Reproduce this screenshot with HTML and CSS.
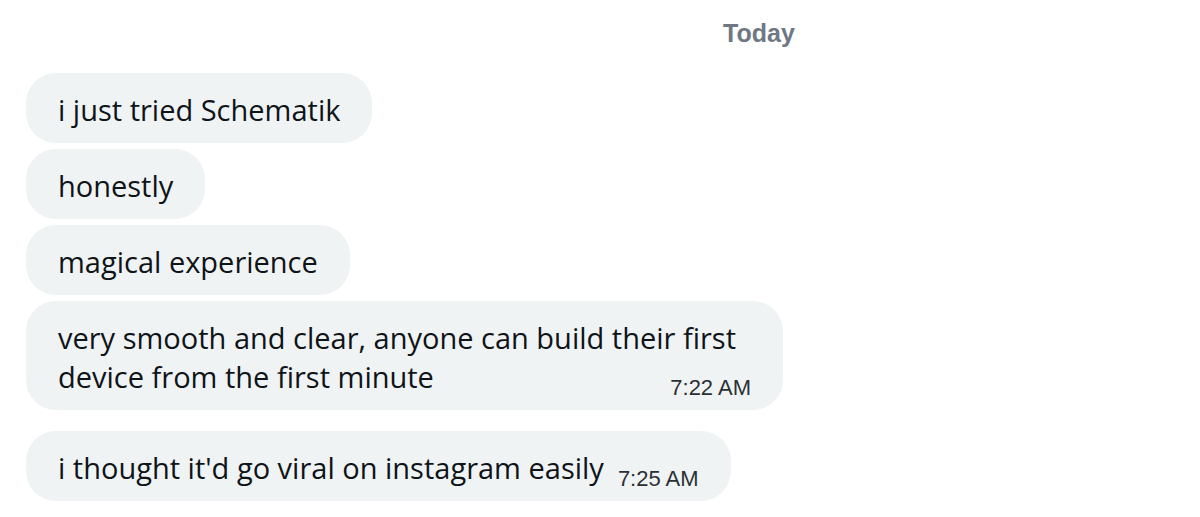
FILE: index.html
```html
<!DOCTYPE html>
<html lang="en">
<head>
<meta charset="utf-8">
<title>Messages</title>
<link rel="stylesheet" href="styles.css">
</head>
<body>
<main class="chat">
  <div class="day"><span class="day-label">Today</span></div>
  <div class="group">
    <div class="bubble">i just tried Schematik</div>
    <div class="bubble">honestly</div>
    <div class="bubble">magical experience</div>
    <div class="bubble">very smooth and clear, anyone can build their first device from the first minute<span class="time">7:22 AM</span></div>
  </div>
  <div class="group">
    <div class="bubble">i thought it'd go viral on instagram easily<span class="time">7:25 AM</span></div>
  </div>
</main>
</body>
</html>
```
FILE: styles.css
```css
html, body {
  margin: 0;
  padding: 0;
  background: #ffffff;
}

.chat {
  display: flex;
  flex-direction: column;
  padding: 0 0 0 26px;
  font-family: "Open Sans", "Noto Sans", sans-serif;
  color: #0f1419;
}

.day {
  padding: 21px 0 0 292px;
  height: 73px;
  box-sizing: border-box;
  text-align: center;
}

.day-label {
  font-family: "Liberation Sans", Arial, sans-serif;
  font-weight: 700;
  font-size: 25px;
  line-height: 25px;
  color: #6e7884;
}

.group {
  display: flex;
  flex-direction: column;
  align-items: flex-start;
  gap: 6px;
  margin-bottom: 21px;
}

.bubble {
  display: flow-root;
  max-width: 693px;
  padding: 17px 32px 14px 32px;
  background: #eff3f4;
  border-radius: 30px;
  font-size: 29px;
  font-weight: 450;
  line-height: 39px;
}

.time {
  float: right;
  margin: 19px 0 -10px 14px;
  font-family: "Liberation Sans", Arial, sans-serif;
  font-size: 22px;
  font-weight: 400;
  line-height: 24px;
  color: #2b3034;
}
```
